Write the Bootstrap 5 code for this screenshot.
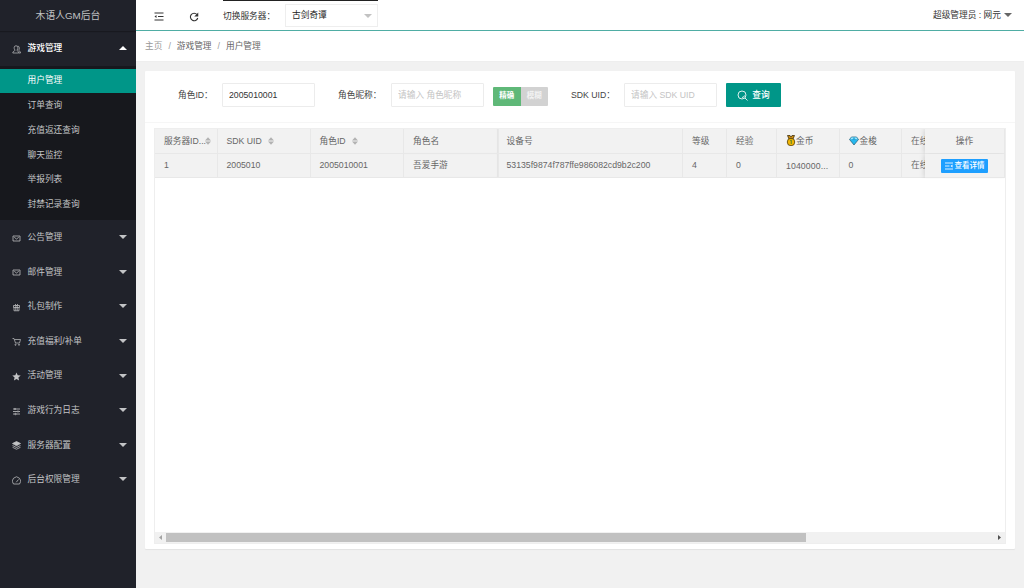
<!DOCTYPE html>
<html lang="zh-CN">
<head>
<meta charset="utf-8">
<meta name="viewport" content="width=device-width, initial-scale=1">
<title>木语人GM后台</title>
<link href="https://cdn.jsdelivr.net/npm/bootstrap@5.3.0/dist/css/bootstrap.min.css" rel="stylesheet">
<style>
body{font:8.7px/1.4 "Liberation Sans","Noto Sans CJK SC",sans-serif;color:#666;background:#f1f1f1;height:588px;overflow:hidden}
svg{display:block;flex:none}
.side{width:136px;background:#20222a;color:#c3c4c6}
.brand{height:30.5px;padding-top:1px;font-size:9.8px;box-shadow:0 1px 1px rgba(0,0,0,.25);color:#c0c1c3}
.menu-item{height:34.6px;padding:0 9px 1px 12px}
.menu-item span{position:relative;left:-.5px}
.menu-item .menu-icon{width:9px;height:9px;margin-right:7px;position:relative;top:1px}
.menu-item.open{height:35px;color:#fff;padding-bottom:0}
.tri{border:4px solid transparent;border-top-color:currentColor;border-bottom:0;width:0;height:0}
.open .tri{border-top:0;border-bottom:4px solid #fff}
.sub{background:#17181d;padding:3px 0 3.4px}
.sub a{display:flex;align-items:center;height:24.75px;padding-left:27.5px;padding-bottom:.6px;color:#c0c1c2;text-decoration:none}
.sub a.active{background:#009688;color:#fff}
.topbar{height:31px;border-bottom:1px solid #4fada4;color:#333;padding:0 12px 0 18px}
.server{width:155px;height:30px;margin-left:24px;border-top:1px solid #222;color:#333}
.server-label{width:62px;padding-top:1px}
.server-select{width:93px;height:23px;margin-bottom:1px;border:1px solid #eee;padding:1px 5px 0 6px;color:#222}
.crumbs{height:31px;padding-left:9px;padding-top:1px;border-bottom:1px solid #eee}
.crumbs .sep{margin:0 6px;color:#999}
.panel{margin:9px 9px 0 9px;width:870px;height:478px;background:#fff;border-radius:1px;box-shadow:0 1px 1px rgba(0,0,0,.06)}
.filters{height:52px;padding-bottom:3px;border-bottom:1px solid #f6f6f6;color:#444;padding-left:33px}
.filters .form-control{width:93px;height:24px;border:1px solid #ececec;border-radius:1px;font-size:8.7px;padding:0 6px 1px;color:#333;line-height:21px}
.filters .form-control::placeholder{color:#c4c4c4;opacity:1}
.seg{height:19px;width:55px;margin-left:9px;margin-top:2px;border-radius:1px;overflow:hidden;font-size:7.5px;font-weight:700;color:#fff}
.seg span{width:27.5px;background:#d2d2d2;color:#f3f3f3}
.seg span:first-child{background:#5fb878;color:#fff}
.search-btn{width:55px;height:24px;margin-left:9px;background:#009688;color:#fff;border:0;border-radius:1px;font-size:8.7px;font-weight:500;padding:0}
.grid-box{margin:5px 9px 0 9px;width:852px;height:416px;border:1px solid #eee;position:relative}
.grid-view{height:403px;overflow:hidden}
.trow{display:grid;grid-template-columns:62.5px 93px 93.5px 94.5px 184.5px 44px 50px 62.5px 62.5px 23px 80px;background:#f2f2f2}
.trow>div{height:24.6px;border-right:1px solid #e8e8e8;border-bottom:1px solid #e8e8e8;padding-left:9px;white-space:nowrap;overflow:hidden;display:flex;align-items:center}
.trow>div:nth-child(4){box-shadow:inset -1px 0 1px #e4e4e4}
.trow>div:nth-child(5){padding-left:8px}
.trow>div:nth-child(10){border-right:0}
.trow>div.fixed-col{padding:0;justify-content:center;background:#f2f2f2;position:relative;box-shadow:-1px 0 5px rgba(0,0,0,.13);overflow:visible;clip-path:inset(0 0 0 -6px)}
.coins{letter-spacing:.12px;padding-top:1px}
.detail-btn{width:47px;height:14px;margin-top:1px;background:#1e9fff;color:#fff;font-size:7.5px;font-weight:500;border-radius:1px;border:0;padding:0;white-space:nowrap}
.hbar{height:11px;background:#f1f1f1}
.thumb{width:640px;height:9px;background:#c1c1c1}
</style>
</head>
<body>
<svg width="0" height="0" class="position-absolute">
<symbol id="mail" viewBox="0 0 18 18"><path d="M2 4h14v10H2zM4.500 6.500 9 10l4.500-3.500" fill="none" stroke="currentColor" stroke-width="1.500"/></symbol>
<symbol id="sort" viewBox="0 0 6 8"><path d="M0 3.400 3 .3l3 3.100zM0 4.600h6L3 7.700z" fill="#b2b2b2"/></symbol>
</svg>
<div class="d-flex h-100">
<aside class="side flex-shrink-0">
<div class="brand d-flex align-items-center justify-content-center">木语人GM后台</div>
<div class="menu-item open d-flex align-items-center"><svg class="menu-icon" viewBox="0 0 18 18" fill="none" stroke="#c3c4c6" stroke-width="1.400"><path d="M6 10.500C3 6 4 1.500 8 1.500s5 4.500 2 9c0 1.500 3.500 1.500 3.500 5.500H1.500c0-4 4.500-4 4.500-5.500zM11.500 2c3.500.5 4 5 2 8.500 0 1.500 3.500 1.500 3.500 5.500h-3"/></svg><span class="fw-medium">游戏管理</span><i class="tri ms-auto"></i></div>
<nav class="sub"><a class="active">用户管理</a><a>订单查询</a><a>充值返还查询</a><a>聊天监控</a><a>举报列表</a><a>封禁记录查询</a></nav>
<div class="menu-item d-flex align-items-center"><svg class="menu-icon"><use href="#mail"/></svg><span>公告管理</span><i class="tri ms-auto"></i></div>
<div class="menu-item d-flex align-items-center"><svg class="menu-icon"><use href="#mail"/></svg><span>邮件管理</span><i class="tri ms-auto"></i></div>
<div class="menu-item d-flex align-items-center"><svg class="menu-icon" viewBox="0 0 18 18" fill="none" stroke="currentColor" stroke-width="1.500"><path d="M3 5h12v4H3zM4 9v6.500h10V9M7.500 5v10M10.500 5v10M9 5 6 2M9 5l3-3"/></svg><span>礼包制作</span><i class="tri ms-auto"></i></div>
<div class="menu-item d-flex align-items-center"><svg class="menu-icon" viewBox="0 0 18 18" fill="none" stroke="currentColor" stroke-width="1.400"><path d="M1 3h3l3 9h8l2-7H5"/><circle cx="7" cy="15.500" r="1.200"/><circle cx="14" cy="15.500" r="1.200"/></svg><span>充值福利/补单</span><i class="tri ms-auto"></i></div>
<div class="menu-item d-flex align-items-center"><svg class="menu-icon" viewBox="0 0 18 18"><path fill="currentColor" d="m9 1 2.400 5.600 6 .5-4.600 4 1.400 6L9 13.900l-5.200 3.200 1.400-6-4.600-4 6-.5z"/></svg><span>活动管理</span><i class="tri ms-auto"></i></div>
<div class="menu-item d-flex align-items-center"><svg class="menu-icon" viewBox="0 0 18 18" stroke="currentColor" stroke-width="1.600"><path d="M2 4h14M2 9h14M2 14h14"/><circle cx="6" cy="4" r="1.400"/><circle cx="12" cy="9" r="1.400"/><circle cx="7" cy="14" r="1.400"/></svg><span>游戏行为日志</span><i class="tri ms-auto"></i></div>
<div class="menu-item d-flex align-items-center"><svg class="menu-icon" viewBox="0 0 18 18" fill="none" stroke="currentColor" stroke-width="1.500"><path d="m9 1 8 4-8 4.500L1 5z" fill="currentColor"/><path d="m1 9 8 4 8-4M1 12.500l8 4 8-4"/></svg><span>服务器配置</span><i class="tri ms-auto"></i></div>
<div class="menu-item d-flex align-items-center"><svg class="menu-icon" viewBox="0 0 18 18" fill="none" stroke="currentColor" stroke-width="1.500"><path d="M3 16a8.300 8.300 0 1 1 12 0zM8.500 12.500l4.500-5.500"/></svg><span>后台权限管理</span><i class="tri ms-auto"></i></div>
</aside>
<main class="flex-grow-1">
<header class="topbar bg-white d-flex align-items-center">
<svg style="margin-top:3px" width="10" height="9" viewBox="0 0 20 18" fill="none" stroke="#333" stroke-width="2"><path d="M1 2h18M8 9h11M1 16h18"/><path d="M1 9l4-3v6z" fill="#333" stroke="none"/></svg>
<svg style="margin-left:25px;margin-top:3px" width="10" height="10" viewBox="0 0 20 20"><path d="M16 5a7.500 7.500 0 1 0 1.500 7" fill="none" stroke="#333" stroke-width="2.200"/><path d="M18.500 1v8h-8z" fill="#333"/></svg>
<div class="server d-flex align-items-center"><span class="server-label">切换服务器：</span><div class="server-select d-flex align-items-center justify-content-between"><span>古剑奇谭</span><i class="tri" style="color:#c2c2c2"></i></div></div>
<div class="ms-auto d-flex align-items-center"><span>超级管理员 : 网元</span><i class="tri" style="color:#666;margin-left:3px"></i></div>
</header>
<div class="crumbs bg-white d-flex align-items-center"><span style="color:#999">主页</span><span class="sep">/</span><span>游戏管理</span><span class="sep">/</span><span>用户管理</span></div>
<section class="panel">
<form class="filters d-flex align-items-center">
<label style="width:44px">角色ID：</label><input class="form-control" value="2005010001" aria-label="角色ID">
<label style="width:53px;margin-left:23px">角色昵称：</label><input class="form-control" placeholder="请输入 角色昵称" aria-label="角色昵称">
<div class="seg d-flex"><span class="d-flex align-items-center justify-content-center">精确</span><span class="d-flex align-items-center justify-content-center">模糊</span></div>
<label style="width:53px;margin-left:23px">SDK UID：</label><input class="form-control" placeholder="请输入 SDK UID" aria-label="SDK UID">
<button type="button" class="search-btn d-flex align-items-center justify-content-center"><svg class="me-1" width="11" height="11" viewBox="0 0 22 22" fill="none" stroke="#fff" stroke-width="1.700"><circle cx="10" cy="10" r="8"/><path d="m16 16 5 5M10 15a5 5 0 0 0 5-4"/></svg>查询</button>
</form>
<div class="grid-box">
<div class="grid-view">
<div class="trow">
<div>服务器ID...<svg style="margin-left:-1px" width="6" height="8"><use href="#sort"/></svg></div>
<div>SDK UID<svg style="margin-left:6px" width="6" height="8"><use href="#sort"/></svg></div>
<div>角色ID<svg style="margin-left:6px" width="6" height="8"><use href="#sort"/></svg></div>
<div>角色名</div><div>设备号</div><div>等级</div><div>经验</div>
<div><svg width="10" height="11" viewBox="0 0 20 22"><path d="M3 1h5l2 3 2-3h5l-3 7H6z" fill="#c98a10" stroke="#3a2a08" stroke-width="1.500"/><circle cx="10" cy="14" r="7.500" fill="#f2b705" stroke="#4a3508" stroke-width="1.500"/><path d="m8.500 11 2-1v8" fill="none" stroke="#58852a" stroke-width="2"/></svg>金币</div>
<div><svg width="10" height="10" viewBox="0 0 20 20" stroke="#17465c" stroke-width="1.200"><path d="M5 2h10l4 5-9 11L1 7z" fill="#27b8ee"/><path d="M2 7h16l-3-4.500H5zM7 7l3-4 3 4" fill="#a6eaff" stroke="#158cc0" stroke-width=".7"/></svg><span style="margin-left:1px">金梭</span></div>
<div>在线</div><div class="fixed-col">操作</div>
</div>
<div class="trow">
<div>1</div><div>2005010</div><div>2005010001</div><div>吾爱手游</div><div>53135f9874f787ffe986082cd9b2c200</div><div>4</div><div>0</div><div class="coins">1040000...</div><div>0</div><div>在线</div>
<div class="fixed-col"><button class="detail-btn d-flex align-items-center justify-content-center"><svg style="margin-right:2px" width="8" height="8" viewBox="0 0 16 16" fill="none" stroke="#fff" stroke-width="1.700"><path d="M0 2h16M0 8h9M0 14h16"/><path d="M15 5v6l-4-3z" fill="#fff" stroke="none"/></svg>查看详情</button></div>
</div>
</div>
<div class="hbar d-flex align-items-center">
<svg width="11" height="11" viewBox="0 0 11 11"><path d="M7 3v5L4 5.500z" fill="#a3a3a3"/></svg><div class="thumb"></div>
<svg class="ms-auto" width="11" height="11" viewBox="0 0 11 11"><path d="M4 3v5l3-2.500z" fill="#505050"/></svg>
</div>
</div>
</section>
</main>
</div>
<script src="https://cdn.jsdelivr.net/npm/bootstrap@5.3.0/dist/js/bootstrap.bundle.min.js"></script>
</body>
</html>
